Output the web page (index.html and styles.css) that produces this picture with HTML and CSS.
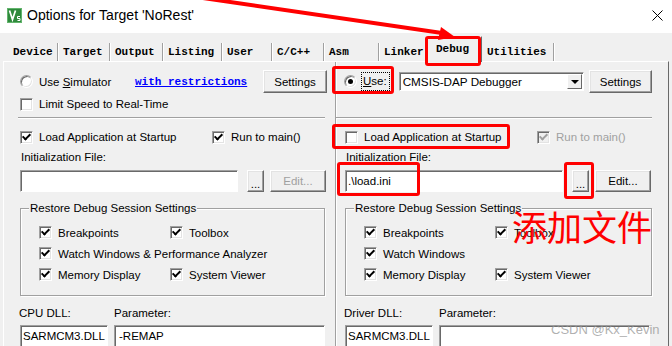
FILE: index.html
```html
<!DOCTYPE html>
<html lang="en">
<head>
    <meta charset="UTF-8">
    <meta name="viewport" content="width=device-width, initial-scale=1.0">
    <title>Options for Target 'NoRest'</title>
    <link rel="stylesheet" href="styles.css">
</head>
<body>
    <div class="titlebar">
        <svg class="app-icon" viewBox="0 0 15 15">
            <rect width="15" height="15" fill="#2f8a3c"/>
            <rect x="0.5" y="0.5" width="14" height="14" fill="none" stroke="#62b46c"/>
            <path d="M2.5 2.5 L5.5 11.5 L8.5 2.5" stroke="#fff" stroke-width="1.7" fill="none"/>
            <path d="M13 8.5 h-2.5 v2 h2.5 v2 h-2.5" stroke="#fff" stroke-width="1" fill="none"/>
        </svg>
        <span class="title">Options for Target 'NoRest'</span>
        <svg class="close" viewBox="0 0 11 11">
            <path d="M0.5 0.5 L10.5 10.5 M10.5 0.5 L0.5 10.5" stroke="#000" stroke-width="1"/>
        </svg>
    </div>

    <div class="tabs">
        <div class="tab tab-device">Device</div>
        <div class="tab tab-target">Target</div>
        <div class="tab tab-output">Output</div>
        <div class="tab tab-listing">Listing</div>
        <div class="tab tab-user">User</div>
        <div class="tab tab-cc">C/C++</div>
        <div class="tab tab-asm">Asm</div>
        <div class="tab tab-linker">Linker</div>
        <div class="tab tab-debug active">Debug</div>
        <div class="tab tab-util">Utilities</div>
    </div>

    <div class="panel">
        <!-- simulator side -->
        <div class="col col-left">
            <div class="row-top">
                <span class="radio"></span>
                <span class="sim-label">Use <u>S</u>imulator</span>
                <a class="link">with restrictions</a>
                <button class="btn settings">Settings</button>
            </div>
            <div class="row-speed">
                <span class="check"></span>
                <span class="opt-text">Limit Speed to Real-Time</span>
            </div>
            <div class="sep"></div>
            <div class="row-load">
                <div class="opt first"><span class="check on"></span><span>Load Application at Startup</span></div>
                <div class="opt"><span class="check on"></span><span>Run to main()</span></div>
            </div>
            <div class="caption">Initialization File:</div>
            <div class="file-row">
                <div class="field file"></div>
                <button class="btn dots">...</button>
                <button class="btn edit disabled">Edit...</button>
            </div>
            <div class="group">
                <div class="group-label">Restore Debug Session Settings</div>
                <div class="group-grid">
                    <div class="opt"><span class="check on"></span><span>Breakpoints</span></div>
                    <div class="opt"><span class="check on"></span><span>Toolbox</span></div>
                    <div class="opt wide"><span class="check on"></span><span>Watch Windows &amp; Performance Analyzer</span></div>
                    <div class="opt"><span class="check on"></span><span>Memory Display</span></div>
                    <div class="opt"><span class="check on"></span><span>System Viewer</span></div>
                </div>
            </div>
            <div class="dll-caption">
                <span>CPU DLL:</span>
                <span>Parameter:</span>
            </div>
            <div class="dll-row">
                <div class="field">SARMCM3.DLL</div>
                <div class="field param">-REMAP</div>
            </div>
        </div>

        <!-- debugger side -->
        <div class="col col-right">
            <div class="row-top">
                <span class="radio on"></span>
                <span class="use-focus"><u>U</u>se:</span>
                <div class="combo">
                    <span>CMSIS-DAP Debugger</span>
                    <span class="combo-btn"></span>
                </div>
                <button class="btn settings">Settings</button>
            </div>
            <div class="row-speed"></div>
            <div class="sep"></div>
            <div class="row-load">
                <div class="opt first"><span class="check"></span><span>Load Application at Startup</span></div>
                <div class="opt disabled"><span class="check on dis"></span><span>Run to main()</span></div>
            </div>
            <div class="caption">Initialization File:</div>
            <div class="file-row">
                <div class="field file">.\load.ini</div>
                <button class="btn dots">...</button>
                <button class="btn edit">Edit...</button>
            </div>
            <div class="group">
                <div class="group-label">Restore Debug Session Settings</div>
                <div class="group-grid">
                    <div class="opt"><span class="check on"></span><span>Breakpoints</span></div>
                    <div class="opt"><span class="check on"></span><span>Toolbox</span></div>
                    <div class="opt wide"><span class="check on"></span><span>Watch Windows</span></div>
                    <div class="opt"><span class="check on"></span><span>Memory Display</span></div>
                    <div class="opt"><span class="check on"></span><span>System Viewer</span></div>
                </div>
            </div>
            <div class="dll-caption">
                <span>Driver DLL:</span>
                <span>Parameter:</span>
            </div>
            <div class="dll-row">
                <div class="field">SARMCM3.DLL</div>
                <div class="field param"></div>
            </div>
        </div>
    </div>

    <!-- annotations drawn over the screenshot -->
    <svg class="arrow" viewBox="0 0 672 60">
        <line x1="196" y1="-3" x2="442" y2="33" stroke="#f00" stroke-width="4"/>
        <polygon points="455,37 441,27 438,40" fill="#f00"/>
    </svg>
    <div class="mark mark-debug"></div>
    <div class="mark mark-use"></div>
    <div class="mark mark-load"></div>
    <div class="mark mark-file"></div>
    <div class="mark mark-dots"></div>
    <div class="note">添加文件</div>
    <div class="watermark">CSDN @Kx_Kevin</div>
</body>
</html>
```

FILE: styles.css
```css
body {
    margin: 0;
    width: 672px;
    height: 346px;
    overflow: hidden;
    position: relative;
    background-color: #f0f0f0;
    font-family: "Liberation Sans", Arial, sans-serif;
    font-size: 11.5px;
    color: #000;
}

/* title bar */
.titlebar {
    height: 33px;
    padding-bottom: 3px;
    box-sizing: border-box;
    background-color: #fff;
    display: flex;
    align-items: center;
}

.app-icon {
    width: 15px;
    height: 15px;
    margin-left: 7px;
}

.title {
    margin-left: 5px;
    font-size: 14px;
}

.close {
    width: 11px;
    height: 11px;
    margin-left: auto;
    margin-right: 9px;
}

/* tab strip */
.tabs {
    height: 28px;
    padding-left: 8px;
    display: flex;
    align-items: flex-end;
    position: relative;
    z-index: 1;
    font-family: "Liberation Mono", monospace;
    font-weight: bold;
    font-size: 11px;
}

.tab {
    height: 18px;
    line-height: 18px;
    padding-left: 5px;
    box-sizing: border-box;
    border-right: 1px solid #a0a0a0;
    box-shadow: 1px 0 0 #fff;
    white-space: nowrap;
}

.tab-device { width: 50px; }
.tab-target { width: 52px; }
.tab-output { width: 53px; }
.tab-listing { width: 59px; }
.tab-user { width: 50px; }
.tab-cc { width: 52px; }
.tab-asm { width: 55px; }
.tab-linker { width: 47px; }
.tab-util { width: 72px; }

.tab.active {
    width: 56px;
    height: 26px;
    line-height: 24px;
    margin-bottom: -1px;
    padding-left: 9px;
    background-color: #f0f0f0;
    border-top: 1px solid #fff;
    border-left: 1px solid #fff;
    border-right: 1px solid #696969;
    box-shadow: none;
}

/* main panel */
.panel {
    margin-left: 3px;
    width: 666px;
    height: 285px;
    box-sizing: border-box;
    border-top: 1px solid #fff;
    border-left: 1px solid #fff;
    border-right: 1px solid #696969;
    display: grid;
    grid-template-columns: 332px 1fr;
}

.col {
    display: flex;
    flex-direction: column;
    box-sizing: border-box;
    padding-top: 8px;
    min-width: 0;
}

.col-left {
    padding-left: 16px;
    padding-right: 8px;
    border-right: 1px solid #a0a0a0;
    box-shadow: 1px 0 0 #fff;
}

.col-right {
    padding-left: 9px;
    padding-right: 16px;
}

.row-top {
    height: 23px;
    display: flex;
    align-items: center;
}

.row-speed {
    height: 16px;
    margin-top: 3px;
    display: flex;
    align-items: center;
    gap: 6px;
}

.sep {
    margin-top: 5px;
    border-top: 1px solid #a0a0a0;
    border-bottom: 1px solid #fff;
}

.col-left .sep { margin-left: -2px; margin-right: 2px; }
.col-right .sep { margin-left: -9px; }

.row-load {
    height: 18px;
    margin-top: 9px;
    display: flex;
    align-items: center;
}

.caption {
    height: 14px;
    line-height: 14px;
    margin-top: 4px;
    padding-left: 1px;
}

.file-row {
    height: 22px;
    margin-top: 6px;
    display: flex;
}

/* option = box + text */
.opt {
    display: flex;
    align-items: center;
    gap: 6px;
    white-space: nowrap;
}

.opt.first { width: 192px; }

.opt.disabled { color: #a0a0a0; }

.sim-label {
    width: 96px;
    margin-left: 6px;
}

.link {
    color: #0000ff;
    text-decoration: underline;
    font-family: "Liberation Mono", monospace;
    font-weight: bold;
    font-size: 11px;
}

/* classic widgets */
.check,
.radio {
    width: 13px;
    height: 13px;
    flex: none;
    box-sizing: border-box;
    position: relative;
    background-color: #fff;
    border: 1px solid;
    border-color: #a0a0a0 #fff #fff #a0a0a0;
    box-shadow: inset 1px 1px 0 #696969, inset -1px -1px 0 #e3e3e3;
}

.check.on::after {
    content: '';
    position: absolute;
    left: 3px;
    top: 0px;
    width: 3px;
    height: 6px;
    border: solid #000;
    border-width: 0 2px 2px 0;
    transform: rotate(45deg);
}

.check.dis {
    background-color: #f0f0f0;
}

.check.dis::after {
    border-color: #a0a0a0;
}

.radio {
    border-radius: 50%;
}

.col-right .radio { margin-left: -1px; }

.radio.on::after {
    content: '';
    position: absolute;
    left: 3px;
    top: 3px;
    width: 5px;
    height: 5px;
    border-radius: 50%;
    background-color: #000;
}

.btn {
    height: 23px;
    padding: 0;
    box-sizing: border-box;
    background-color: #f0f0f0;
    border: 1px solid;
    border-color: #fff #696969 #696969 #fff;
    box-shadow: inset -1px -1px 0 #a0a0a0, inset 1px 1px 0 #e3e3e3;
    font-family: inherit;
    font-size: 11.5px;
    color: #000;
}

.btn.settings {
    width: 64px;
    margin-left: auto;
}

.col-right .btn.settings { width: 63px; }

.btn.dots {
    width: 17px;
    height: 22px;
    margin-left: 9px;
    line-height: 26px;
}

.btn.edit {
    width: 56px;
    height: 22px;
    margin-left: 6px;
}

.btn.disabled { color: #a0a0a0; }

.field {
    height: 22px;
    box-sizing: border-box;
    padding-left: 2px;
    display: flex;
    align-items: center;
    background-color: #fff;
    border: 1px solid;
    border-color: #a0a0a0 #fff #fff #a0a0a0;
    box-shadow: inset 1px 1px 0 #696969;
    white-space: nowrap;
    overflow: hidden;
}

.field.file { width: 218px; }

.field.param { padding-left: 4px; }

.use-focus {
    height: 19px;
    line-height: 17px;
    margin-left: 4px;
    padding: 0 2px 0 1px;
    box-sizing: border-box;
    border: 1px dotted #000;
}

.combo {
    width: 185px;
    height: 19px;
    margin-left: 9px;
    padding-left: 3px;
    box-sizing: border-box;
    display: flex;
    align-items: center;
    background-color: #fff;
    border: 1px solid;
    border-color: #a0a0a0 #fff #fff #a0a0a0;
    box-shadow: inset 1px 1px 0 #696969;
    font-size: 11.7px;
}

.combo-btn {
    width: 15px;
    height: 15px;
    margin-left: auto;
    margin-right: 1px;
    box-sizing: border-box;
    position: relative;
    background-color: #f0f0f0;
    border: 1px solid;
    border-color: #fff #696969 #696969 #fff;
}

.combo-btn::after {
    content: '';
    position: absolute;
    left: 3px;
    top: 5px;
    border-left: 4px solid transparent;
    border-right: 4px solid transparent;
    border-top: 4px solid #000;
}

/* restore session group */
.group {
    margin-top: 16px;
    padding-bottom: 10px;
    border: 1px solid #a0a0a0;
    box-shadow: inset 1px 1px 0 #fff, 1px 1px 0 #fff;
}

.col-left .group { margin-right: 2px; }

.group-label {
    width: fit-content;
    height: 14px;
    line-height: 14px;
    margin-top: -8px;
    margin-left: 8px;
    padding: 0 1px;
    background-color: #f0f0f0;
}

.group-grid {
    margin-top: 7px;
    padding-left: 18px;
    display: grid;
    grid-template-columns: 131px auto;
    grid-auto-rows: 21px;
}

.group-grid .opt.wide { grid-column: span 2; }

/* dll rows */
.dll-caption,
.dll-row {
    display: grid;
    grid-template-columns: 88px 1fr;
    gap: 6px;
    margin-right: 2px;
}

.dll-caption {
    height: 14px;
    line-height: 14px;
    margin-top: 10px;
}

.dll-caption span:first-child { margin-left: -1px; }

.dll-row { margin-top: 5px; }

/* red annotations */
.arrow {
    position: absolute;
    left: 0;
    top: 0;
    width: 672px;
    height: 60px;
    z-index: 5;
}

.mark {
    position: absolute;
    z-index: 5;
    box-sizing: border-box;
    border: 3px solid #f00;
    border-radius: 3px;
}

.mark-debug { left: 425px; top: 36px; width: 56px; height: 30px; }
.mark-use { left: 332px; top: 66px; width: 62px; height: 28px; }
.mark-load { left: 332px; top: 124px; width: 178px; height: 25px; }
.mark-file { left: 337px; top: 162px; width: 83px; height: 34px; }
.mark-dots { left: 564px; top: 162px; width: 30px; height: 37px; }

.note {
    position: absolute;
    z-index: 5;
    left: 512px;
    top: 208px;
    font-family: "Noto Sans CJK SC", sans-serif;
    font-size: 35px;
    line-height: 1;
    color: #f00;
}

.watermark {
    position: absolute;
    z-index: 5;
    left: 551px;
    top: 322px;
    font-size: 13px;
    color: rgba(150, 150, 150, 0.75);
}
```
